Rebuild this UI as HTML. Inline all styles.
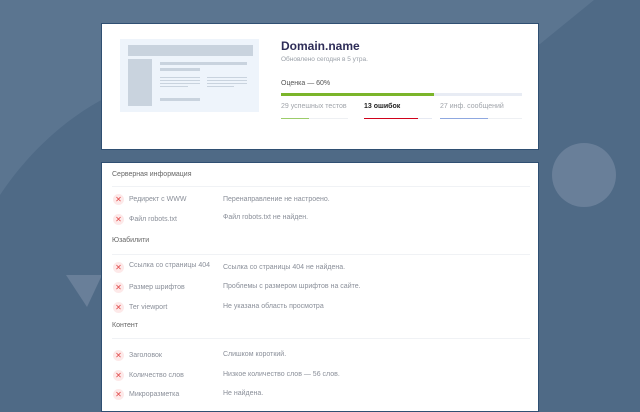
<!DOCTYPE html>
<html><head><meta charset="utf-8"><style>
*{margin:0;padding:0;box-sizing:border-box}
body{width:640px;height:400px;overflow:hidden;background:#4f6a86;font-family:"Liberation Sans",sans-serif;position:relative}
.a{position:absolute}
.t{position:absolute;font-size:7px;color:#8a8f99;white-space:nowrap;line-height:1}
.card{position:absolute;background:#fff;border:1px solid #2f4f72}
.ic{position:absolute;width:11px;height:11px;border-radius:50%;background:#fde9e9;color:#e04848;font-size:8px;line-height:11px;text-align:center}
.hl{position:absolute;left:112px;width:418px;height:1px;background:#f0f2f5}
</style></head><body>
<svg class="a" style="left:0;top:0" width="640" height="400">
<path d="M0 0 H594 L540 44 C420 60 250 60 150 80 C80 100 30 150 0 195 Z" fill="#5b7590"/>
<ellipse cx="584" cy="175" rx="32" ry="32" fill="#697f99"/>
<polygon points="66,275 102,275 87,307" fill="#697f99"/>
</svg>
<div class="card" style="left:101px;top:23px;width:438px;height:127px"></div>
<div class="a" style="left:120px;top:39px;width:139px;height:73px;background:#eef4fb"></div>
<div class="a" style="left:128px;top:45px;width:125px;height:11px;background:#c9d3de"></div>
<div class="a" style="left:128px;top:59px;width:24px;height:47px;background:#c9d3de"></div>
<div class="a" style="left:160px;top:62px;width:87px;height:3px;background:#c9d3de"></div>
<div class="a" style="left:160px;top:68px;width:40px;height:3px;background:#c9d3de"></div>
<div class="a" style="left:160px;top:77px;width:40px;height:1px;background:#c9d3de;box-shadow:0 3px 0 #c9d3de,0 6px 0 #c9d3de"></div>
<div class="a" style="left:207px;top:77px;width:40px;height:1px;background:#c9d3de;box-shadow:0 3px 0 #c9d3de,0 6px 0 #c9d3de"></div>
<div class="a" style="left:160px;top:86px;width:28px;height:1px;background:#c9d3de"></div>
<div class="a" style="left:207px;top:86px;width:27px;height:1px;background:#c9d3de"></div>
<div class="a" style="left:160px;top:98px;width:40px;height:3px;background:#c9d3de"></div>
<div class="t" style="left:281px;top:40px;font-size:12px;font-weight:bold;color:#2e2d58">Domain.name</div>
<div class="t" style="left:281px;top:57px;font-size:6.5px;color:#9aa0a8">Обновлено сегодня в 5 утра.</div>
<div class="t" style="left:281px;top:80px;color:#555">Оценка — 60%</div>
<div class="a" style="left:281px;top:93px;width:241px;height:3px;background:#e8ecf4"></div>
<div class="a" style="left:281px;top:93px;width:153px;height:3px;background:#7bb52a"></div>
<div class="t" style="left:281px;top:103px;color:#a0a4aa">29 успешных  тестов</div>
<div class="t" style="left:364px;top:103px;color:#222;font-weight:bold">13 ошибок</div>
<div class="t" style="left:440px;top:103px;color:#a0a4aa">27 инф. сообщений</div>
<div class="a" style="left:281px;top:118px;width:67px;height:1px;background:#eef0f3"></div>
<div class="a" style="left:281px;top:118px;width:28px;height:1px;background:#9ccc6a"></div>
<div class="a" style="left:364px;top:118px;width:68px;height:1px;background:#e6e9f2"></div>
<div class="a" style="left:364px;top:118px;width:54px;height:1px;background:#d0021b"></div>
<div class="a" style="left:440px;top:118px;width:82px;height:1px;background:#eef0f3"></div>
<div class="a" style="left:440px;top:118px;width:48px;height:1px;background:#8fa8e0"></div>

<div class="card" style="left:101px;top:162px;width:438px;height:250px"></div>
<div class="t" style="left:112px;top:171px;color:#666">Серверная информация</div>
<div class="hl" style="top:186px"></div>
<div class="ic" style="left:113px;top:194px">✕</div><div class="t" style="left:129px;top:196px">Редирект с WWW</div><div class="t" style="left:223px;top:196px">Перенаправление не настроено.</div>
<div class="ic" style="left:113px;top:214px">✕</div><div class="t" style="left:129px;top:216px">Файл robots.txt</div><div class="t" style="left:223px;top:214px">Файл robots.txt не найден.</div>
<div class="t" style="left:112px;top:237px;color:#666">Юзабилити</div>
<div class="hl" style="top:254px"></div>
<div class="ic" style="left:113px;top:262px">✕</div><div class="t" style="left:129px;top:262px">Ссылка со страницы 404</div><div class="t" style="left:223px;top:264px">Ссылка со страницы 404 не найдена.</div>
<div class="ic" style="left:113px;top:282px">✕</div><div class="t" style="left:129px;top:284px">Размер шрифтов</div><div class="t" style="left:223px;top:283px">Проблемы с размером шрифтов на сайте.</div>
<div class="ic" style="left:113px;top:302px">✕</div><div class="t" style="left:129px;top:304px">Тег viewport</div><div class="t" style="left:223px;top:303px">Не указана область просмотра</div>
<div class="t" style="left:112px;top:322px;color:#666">Контент</div>
<div class="hl" style="top:338px"></div>
<div class="ic" style="left:113px;top:350px">✕</div><div class="t" style="left:129px;top:352px">Заголовок</div><div class="t" style="left:223px;top:351px">Слишком короткий.</div>
<div class="ic" style="left:113px;top:370px">✕</div><div class="t" style="left:129px;top:372px">Количество слов</div><div class="t" style="left:223px;top:371px">Низкое количество слов — 56 слов.</div>
<div class="ic" style="left:113px;top:389px">✕</div><div class="t" style="left:129px;top:391px">Микроразметка</div><div class="t" style="left:223px;top:390px">Не найдена.</div>
</body></html>
